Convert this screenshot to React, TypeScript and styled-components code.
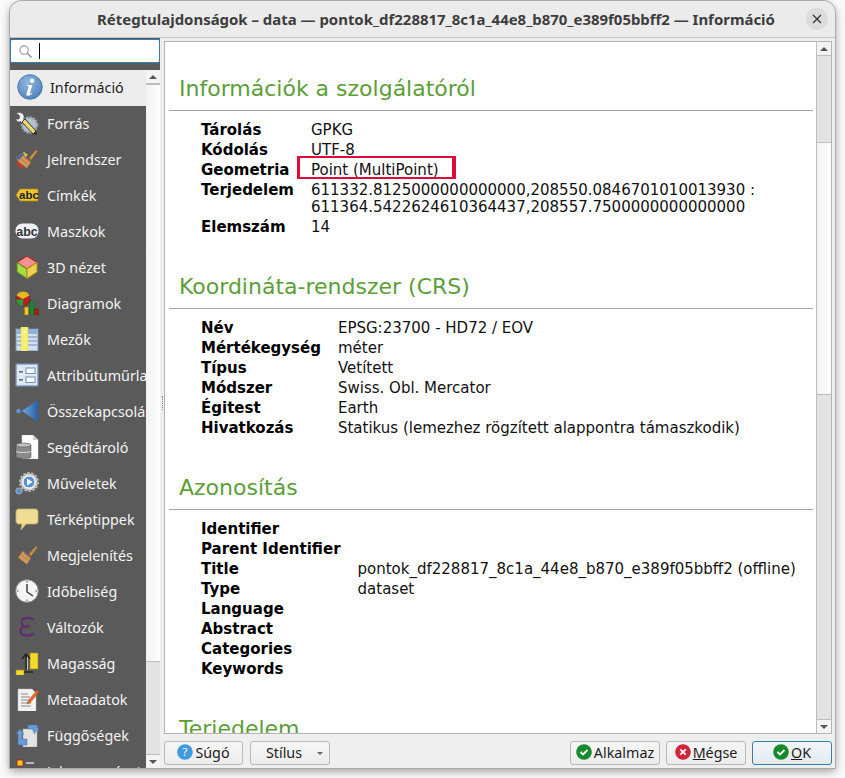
import React from "react";
import styled, { createGlobalStyle } from "styled-components";

const Global = createGlobalStyle`
  html, body { margin: 0; padding: 0; background: #fafafa; }
  #root { width: 845px; height: 778px; overflow: hidden; }
`;

const Window = styled.div`
  margin: 1px 0 0 10px;
  width: 825px;
  height: 767px;
  box-sizing: border-box;
  display: flex;
  flex-direction: column;
  background: #efefef;
  border-radius: 12px 12px 0 0;
  box-shadow: 0 0 0 1px #a9a9a9, 0 3px 10px rgba(0, 0, 0, 0.4);
  overflow: hidden;
`;
const TitleBar = styled.header`
  flex: 0 0 36px;
  display: flex;
  align-items: center;
  justify-content: center;
  position: relative;
  padding-left: 27px;
  background: #ebebeb;
  border-bottom: 1px solid #c4c4c4;
  font: 700 14.95px "Noto Sans", sans-serif;
  color: #3d3d3d;
  white-space: nowrap;
`;
const CloseButton = styled.div`
  position: absolute;
  right: 7px;
  top: 7px;
  width: 22px;
  height: 22px;
  border-radius: 50%;
  background: #dcdcdc;
  display: flex;
  align-items: center;
  justify-content: center;
`;
const Main = styled.div`
  flex: 1;
  min-height: 0;
  display: flex;
`;
const Sidebar = styled.aside`
  flex: 0 0 150px;
  display: flex;
  flex-direction: column;
  background: #5a5a5a;
  min-height: 0;
`;
const SearchBox = styled.div`
  flex: 0 0 24px;
  margin-top: 1px;
  box-sizing: border-box;
  background: #fff;
  border: 1px solid #3a7cab;
  border-radius: 2px;
  display: flex;
  align-items: center;
  padding-left: 8px;
  gap: 7px;
`;
const Caret = styled.span`
  width: 1px;
  height: 16px;
  background: #000;
`;
const SidebarBody = styled.div`
  margin-top: 7px;
  flex: 1;
  min-height: 0;
  display: flex;
`;
const NavList = styled.nav`
  flex: 0 0 136px;
  overflow: hidden;
`;
const NavItem = styled.div<{ $active?: boolean }>`
  height: 36px;
  display: flex;
  align-items: center;
  white-space: nowrap;
  overflow: hidden;
  box-sizing: border-box;
  padding-left: ${(p) => (p.$active ? "7px" : "5px")};
  gap: ${(p) => (p.$active ? "7px" : "8px")};
  background: ${(p) => (p.$active ? "#ececec" : "transparent")};
  color: ${(p) => (p.$active ? "#1c1c1c" : "#f4f4f4")};
  font: 400 14.3px "Noto Sans", sans-serif;
  span { position: relative; top: -1px; }
  svg { flex: none; position: relative; top: -1px; }
`;
const ScrollBar = styled.div<{ $width: number }>`
  flex: 0 0 ${(p) => p.$width}px;
  display: flex;
  flex-direction: column;
  background: #e3e3e3;
  box-sizing: border-box;
`;
const ScrollArrow = styled.div<{ $down?: boolean }>`
  flex: 0 0 14px;
  background: #f4f4f4;
  display: flex;
  align-items: center;
  justify-content: center;
  box-sizing: border-box;
  ${(p) => (p.$down ? "border-top: 1px solid #bdbdbd;" : "border-bottom: 1px solid #bdbdbd;")}
  &::after {
    content: "";
    border-left: 4px solid transparent;
    border-right: 4px solid transparent;
    ${(p) => (p.$down ? "border-top: 4px solid #555;" : "border-bottom: 4px solid #555;")}
  }
`;
const ScrollTrack = styled.div<{ $grow: number }>`
  flex: ${(p) => p.$grow} 0 0;
`;
const ScrollThumb = styled.div<{ $grow: number }>`
  flex: ${(p) => p.$grow} 0 0;
  background: linear-gradient(90deg, #f3f3f3, #fdfdfd);
  border-top: 1px solid #bdbdbd;
  border-bottom: 1px solid #bdbdbd;
  box-sizing: border-box;
`;
const Splitter = styled.div`
  flex: 0 0 4px;
  display: flex;
  align-items: center;
  justify-content: center;
  &::after {
    content: "";
    height: 14px;
    border-left: 1px dotted #8a8a8a;
  }
`;
const RightPane = styled.div`
  flex: 1;
  min-width: 0;
  display: flex;
  flex-direction: column;
  padding: 3px 3px 3px 0;
`;
const Frame = styled.div`
  flex: 0 0 693px;
  display: flex;
  position: relative;
  border: 1px solid #b4b4b4;
  background: #fff;
  box-sizing: border-box;
  overflow: hidden;
`;
const Content = styled.div`
  flex: 1;
  min-width: 0;
  overflow: hidden;
  padding: 34px 3px 0 4px;
`;
const FrameScroll = styled(ScrollBar)`
  border-left: 1px solid #bdbdbd;
`;
const Section = styled.section`
  & + & { margin-top: 37px; }
`;
const Heading = styled.h2`
  margin: 0;
  padding: 0 0 8px 10px;
  font: 400 22px/26px "DejaVu Sans", sans-serif;
  color: #5c9e38;
  border-bottom: 1px solid #a4a4a4;
`;
const InfoTable = styled.table`
  margin: 9px 0 0 32px;
  border-collapse: collapse;
  font: 400 15px/17px "DejaVu Sans", sans-serif;
  color: #111;
  td { padding: 1.5px 0; vertical-align: top; white-space: nowrap; }
  td:first-child { font-weight: 700; color: #000; padding-right: 17px; }
`;
const Highlight = styled.div`
  position: absolute;
  left: 132px;
  top: 114px;
  width: 159px;
  height: 23px;
  box-sizing: border-box;
  border: solid #dc0b3c;
  border-width: 2px 4px 2px 3px;
`;
const Footer = styled.footer`
  margin-top: 7px;
  height: 24px;
  display: flex;
  gap: 7px;
`;
const Spacer = styled.div`
  flex: 1;
`;
const DialogButtons = styled.div`
  display: flex;
  gap: 6px;
`;
const Button = styled.button<{ $w: number; $primary?: boolean; $menu?: boolean }>`
  width: ${(p) => p.$w}px;
  height: 24px;
  padding: 0 ${(p) => (p.$menu ? "12px" : "0")} 2px 0;
  box-sizing: border-box;
  display: flex;
  align-items: center;
  justify-content: center;
  gap: 2px;
  position: relative;
  border-radius: 3px;
  border: 1px solid ${(p) => (p.$primary ? "#3a7cab" : "#b9b9b9")};
  background: ${(p) => (p.$primary ? "linear-gradient(#f3f6f8, #e2eaf0)" : "linear-gradient(#f6f6f6, #ececec)")};
  font: 400 14.3px "Noto Sans", sans-serif;
  color: #1c1c1c;
`;
const DropArrow = styled.span`
  position: absolute;
  right: 6px;
  top: 10px;
  border-left: 3px solid transparent;
  border-right: 3px solid transparent;
  border-top: 3px solid #666;
`;

type S = { size?: number };
const Svg: React.FC<S & { children: React.ReactNode }> = ({ size = 24, children }) => (
  <svg width={size} height={size} viewBox="0 0 24 24">{children}</svg>
);

const InfoIcon = () => (
  <Svg size={26}>
    <defs>
      <radialGradient id="ig" cx="40%" cy="30%" r="80%"><stop offset="0" stopColor="#8fb6de" /><stop offset="1" stopColor="#4a7fbb" /></radialGradient>
    </defs>
    <circle cx="12" cy="12" r="11.3" fill="url(#ig)" stroke="#3f6ea6" strokeWidth="0.8" />
    <circle cx="14" cy="6.2" r="2" fill="#fff" />
    <path d="M9.2 10.2h5l-2.2 7.6c-.1.5.3.6 1.8-.4l.3.7c-1.7 1.6-3.2 2.1-4.4 2-1-.1-1.2-.9-.9-1.9l1.8-6.3c.1-.6-.3-.8-1.5-.7z" fill="#fff" />
  </Svg>
);
const SourceIcon = () => (
  <Svg>
    <circle cx="14.500" cy="14" r="7.500" fill="#b4c2d0" stroke="#9aa7b4" strokeWidth="2.500" strokeDasharray="2 1.200" />
    <path d="M1 3c3-2.500 6.500-1.500 7.500 1 .8 1.500.6 3-.2 4.200l3 3-2.300 2.300-3-3C4 11.500 1.500 10.500.5 8l3.200.2 1.200-2.400L3.500 3.500z" fill="#f2f2f2" stroke="#333" strokeWidth=".4" />
    <path d="M10 8l11 12-3 3L7 11z" fill="#f0d96c" stroke="#222" strokeWidth=".9" />
    <path d="M18 23l3-3 1 2-1 2z" fill="#333" />
  </Svg>
);
const Brush = () => (
  <>
    <path d="M14 11l7-8 1.6 1.3L16 13z" fill="#c98c3e" />
    <path d="M8 8l8 7-4 6.5-9-7z" fill="#cf9a5f" stroke="#8f6228" strokeWidth=".6" />
    <path d="M6.5 12l6 5M9 10l5.5 5" stroke="#8f6228" strokeWidth=".6" />
  </>
);
const SymbologyIcon = () => (
  <Svg>
    <path d="M1 11l8-6 4 3-9 7z" fill="#e9c93a" />
    <path d="M1 11l7-5 2 2-7 5z" fill="#3566b4" />
    <path d="M1 15l3 5 5 1-5-7z" fill="#d2342e" />
    <Brush />
  </Svg>
);
const PaintIcon = () => <Svg><Brush /></Svg>;
const LabelIcon = () => (
  <Svg>
    <path d="M5 6h18v12H5l-4-6z" fill="#eec52f" stroke="#a88510" strokeWidth=".7" />
    <text x="14" y="16" fontFamily="'Liberation Sans', sans-serif" fontWeight="700" fontSize="11.500" textAnchor="middle" fill="#222">abc</text>
  </Svg>
);
const MaskIcon = () => (
  <Svg>
    <rect x="0.500" y="4.500" width="23" height="15" rx="7" fill="#eef0fa" />
    <text x="12" y="16.500" fontFamily="'Liberation Sans', sans-serif" fontWeight="700" fontSize="12.500" textAnchor="middle" fill="#333">abc</text>
  </Svg>
);
const CubeIcon = () => (
  <Svg>
    <path d="M12 1l10 6.5L12 14 2 7.500z" fill="#f79090" stroke="#b41414" strokeWidth="1" />
    <path d="M2 7.500l10 6.500v9.500L2 17z" fill="#a6dc44" stroke="#5f8a12" strokeWidth="1" />
    <path d="M22 7.500L12 14v9.500L22 17z" fill="#f0d050" stroke="#b09012" strokeWidth="1" />
  </Svg>
);
const DiagramIcon = () => (
  <Svg>
    <circle cx="8" cy="8" r="7.2" fill="#bb1e1e" stroke="#333" strokeWidth=".6" />
    <path d="M8 8L1.500 4.500A7.200 7.200 0 0 1 14.500 4.500z" fill="#e8b820" />
    <path d="M8 8v7.200A7.200 7.200 0 0 1 1 9z" fill="#2a9a3a" />
    <rect x="9.500" y="16" width="4" height="8" fill="#f2c523" stroke="#8a6d10" strokeWidth=".5" />
    <rect x="15" y="10" width="4" height="14" fill="#1a8a3a" stroke="#0f5a26" strokeWidth=".5" />
    <rect x="19.500" y="18" width="4" height="6" fill="#a8201a" stroke="#6b1410" strokeWidth=".5" />
  </Svg>
);
const FieldsIcon = () => (
  <Svg>
    <rect x="1" y="2" width="22" height="22" fill="#d4e0f0" stroke="#6f8eb8" />
    <rect x="1" y="2" width="22" height="5" fill="#8fb0d8" />
    <path d="M12 10h10M12 14h10M12 18h10M2 10h6M2 14h6M2 18h6" stroke="#6f8eb8" strokeWidth="1" />
    <rect x="6" y="0" width="7" height="25" fill="#f5f075" stroke="#e2da4a" strokeWidth=".5" />
    <circle cx="9.500" cy="4.500" r="1" fill="#fff" />
  </Svg>
);
const FormIcon = () => (
  <Svg>
    <rect x="1" y="1" width="22" height="22" fill="#dfe7f1" stroke="#6f8eb8" strokeWidth="1.300" />
    <rect x="4" y="8" width="4" height="1.600" fill="#5f6f88" />
    <rect x="4" y="16" width="4" height="1.600" fill="#5f6f88" />
    <rect x="11" y="5" width="9" height="5.500" fill="#fff" stroke="#6f8eb8" />
    <rect x="11" y="14" width="9" height="5.500" fill="#fff" stroke="#6f8eb8" />
  </Svg>
);
const JoinIcon = () => (
  <Svg>
    <defs>
      <linearGradient id="jg" x1="0" x2="1" y1="0" y2="0"><stop offset="0" stopColor="#6ea8e2" /><stop offset="1" stopColor="#2a5fa2" /></linearGradient>
    </defs>
    <circle cx="3.500" cy="12" r="2.300" fill="#5a96d4" />
    <path d="M23 1v22L7 12z" fill="url(#jg)" />
  </Svg>
);
const AuxIcon = () => (
  <Svg>
    <path d="M7 0h11l5 5v19H7z" fill="#fff" stroke="#ddd" strokeWidth=".5" />
    <path d="M18 0v5h5z" fill="#ccc" />
    <path d="M1 10c0-2 15-2 15 0v12c0 2-15 2-15 0z" fill="#8a8a8a" stroke="#444" strokeWidth=".5" />
    <ellipse cx="8.500" cy="10" rx="7.500" ry="2" fill="#c2c2c2" stroke="#444" strokeWidth=".5" />
    <path d="M1 16c0 2 15 2 15 0" fill="none" stroke="#ddd" strokeWidth="1" />
  </Svg>
);
const ActionIcon = () => (
  <Svg>
    <circle cx="14" cy="11" r="8.500" fill="#e6e6e6" stroke="#b5b5b5" strokeWidth="3" strokeDasharray="2.400 1.400" />
    <circle cx="14" cy="11" r="6" fill="#5c8fd0" stroke="#fff" strokeWidth="1" />
    <path d="M12 7.500v7l5.500-3.500z" fill="#fff" />
    <circle cx="4" cy="20" r="3" fill="#5c8fd0" stroke="#bbb" strokeWidth="1.200" strokeDasharray="1.400 .8" />
  </Svg>
);
const TipIcon = () => (
  <Svg>
    <path d="M4 2h16c2 0 3 1 3 3v9c0 2-1 3-3 3H11l-5 6 1-6H4c-2 0-3-1-3-3V5c0-2 1-3 3-3z" fill="#eedd92" stroke="#c7b45e" strokeWidth=".8" />
  </Svg>
);
const ClockIcon = () => (
  <Svg>
    <circle cx="12" cy="12" r="11.300" fill="#f4f4f4" stroke="#8a8a8a" strokeWidth="1" />
    <path d="M12 5v8l6 4" fill="none" stroke="#333" strokeWidth="1.400" />
    <path d="M12 2v1.500M12 20.500V22M2 12h1.500M20.500 12H22" stroke="#555" strokeWidth="1" />
  </Svg>
);
const VarIcon = () => (
  <Svg>
    <path d="M19 5c-2-2-5-2.500-8-2-3 .6-4.500 2.500-4.500 4.500 0 2 1.500 3.500 4 4-3 .3-5 2-5 4.500 0 3 3 4.500 6.500 4.500 3 0 5.500-1 7-2.500M10.500 11.500h4" fill="none" stroke="#5d2f6e" strokeWidth="2.300" />
  </Svg>
);
const ElevIcon = () => (
  <Svg>
    <rect x="15" y="2" width="8" height="16" fill="#f3d92a" stroke="#9c8b12" strokeWidth=".6" />
    <rect x="1" y="19" width="8" height="6" fill="#f3d92a" stroke="#9c8b12" strokeWidth=".6" />
    <path d="M11 19V4M7 8l4-5 4 5M9 21h9" fill="none" stroke="#222" strokeWidth="1.300" />
    <path d="M12.500 19V6" stroke="#ddd" strokeWidth=".8" />
  </Svg>
);
const MetaIcon = () => (
  <Svg>
    <path d="M3 2h14l4 4v19H3z" fill="#f2f2f2" stroke="#bbb" strokeWidth=".5" />
    <path d="M6 7h7M6 10h9M6 13h9M6 16h10M6 19h10" stroke="#888" strokeWidth="1" />
    <path d="M22 3l2 2-9 11-3 1 1-3z" fill="#e56a25" stroke="#a2450f" strokeWidth=".4" />
  </Svg>
);
const DepIcon = () => (
  <Svg>
    <rect x="8" y="6" width="14" height="18" fill="#e3e3e3" stroke="#aaa" strokeWidth=".5" />
    <path d="M13 2h9l2 6h-4v3l-2-3V6h-5z" fill="#6d9ad4" stroke="#3f6ea6" strokeWidth=".5" />
    <path d="M1 11l4-5 4 5H7v5h5v6H3V11z" fill="#6d9ad4" stroke="#3f6ea6" strokeWidth=".5" />
  </Svg>
);
const LegendIcon = () => (
  <Svg>
    <rect x="2" y="1" width="6" height="6" fill="#f2c523" stroke="#a8201a" strokeWidth=".8" />
    <rect x="11" y="3" width="8" height="2" fill="#bbb" />
  </Svg>
);

const SearchIcon = () => (
  <svg width="13" height="13" viewBox="0 0 14 14">
    <circle cx="5.500" cy="5.500" r="4.500" fill="none" stroke="#9a9a9a" strokeWidth="1.200" />
    <path d="M9 9l4.500 4.500" stroke="#8a8a8a" strokeWidth="1.500" />
  </svg>
);
const HelpIcon = () => (
  <svg width="16" height="16" viewBox="0 0 16 16">
    <circle cx="8" cy="8" r="7.800" fill="#3f9ae0" />
    <text x="8" y="12" fontFamily="'Noto Sans', sans-serif" fontSize="11" textAnchor="middle" fill="#fff">?</text>
  </svg>
);
const OkIcon = () => (
  <svg width="16" height="16" viewBox="0 0 16 16">
    <circle cx="8" cy="8" r="7.800" fill="#178a2e" />
    <path d="M4.500 8l2.500 2.500 4.500-4.500" fill="none" stroke="#fff" strokeWidth="1.800" />
  </svg>
);
const CancelIcon = () => (
  <svg width="16" height="16" viewBox="0 0 16 16">
    <circle cx="8" cy="8" r="7.800" fill="#d0263a" />
    <path d="M5.300 5.300l5.400 5.400M10.700 5.300l-5.400 5.400" stroke="#fff" strokeWidth="1.800" />
  </svg>
);
const CloseIcon = () => (
  <svg width="10" height="10" viewBox="0 0 10 10">
    <path d="M1 1l8 8M9 1l-8 8" stroke="#333" strokeWidth="1.200" />
  </svg>
);

const nav: [string, React.FC][] = [
  ["Forrás", SourceIcon],
  ["Jelrendszer", SymbologyIcon],
  ["Címkék", LabelIcon],
  ["Maszkok", MaskIcon],
  ["3D nézet", CubeIcon],
  ["Diagramok", DiagramIcon],
  ["Mezők", FieldsIcon],
  ["Attribútuműrlap", FormIcon],
  ["Összekapcsolások", JoinIcon],
  ["Segédtároló", AuxIcon],
  ["Műveletek", ActionIcon],
  ["Térképtippek", TipIcon],
  ["Megjelenítés", PaintIcon],
  ["Időbeliség", ClockIcon],
  ["Változók", VarIcon],
  ["Magasság", ElevIcon],
  ["Metaadatok", MetaIcon],
  ["Függőségek", DepIcon],
  ["Jelmagyarázat", LegendIcon],
];

const Rows: React.FC<{ rows: [string, React.ReactNode][] }> = ({ rows }) => (
  <InfoTable>
    <tbody>
      {rows.map(([k, v]) => (
        <tr key={k}><td>{k}</td><td>{v}</td></tr>
      ))}
    </tbody>
  </InfoTable>
);

export default function App() {
  return (
    <>
      <Global />
      <Window>
        <TitleBar>
          Rétegtulajdonságok – data — pontok_df228817_8c1a_44e8_b870_e389f05bbff2 — Információ
          <CloseButton><CloseIcon /></CloseButton>
        </TitleBar>
        <Main>
          <Sidebar>
            <SearchBox><SearchIcon /><Caret /></SearchBox>
            <SidebarBody>
              <NavList>
                <NavItem $active><InfoIcon /><span>Információ</span></NavItem>
                {nav.map(([label, Icon]) => (
                  <NavItem key={label}><Icon /><span>{label}</span></NavItem>
                ))}
              </NavList>
              <ScrollBar $width={14}>
                <ScrollArrow />
                <ScrollThumb $grow={579} />
                <ScrollTrack $grow={92} />
                <ScrollArrow $down />
              </ScrollBar>
            </SidebarBody>
          </Sidebar>
          <Splitter />
          <RightPane>
            <Frame>
              <Content>
                <Section>
                  <Heading>Információk a szolgálatóról</Heading>
                  <Rows rows={[
                    ["Tárolás", "GPKG"],
                    ["Kódolás", "UTF-8"],
                    ["Geometria", "Point (MultiPoint)"],
                    ["Terjedelem", <>611332.8125000000000000,208550.0846701010013930 :<br />611364.5422624610364437,208557.7500000000000000</>],
                    ["Elemszám", "14"],
                  ]} />
                </Section>
                <Section>
                  <Heading>Koordináta-rendszer (CRS)</Heading>
                  <Rows rows={[
                    ["Név", "EPSG:23700 - HD72 / EOV"],
                    ["Mértékegység", "méter"],
                    ["Típus", "Vetített"],
                    ["Módszer", "Swiss. Obl. Mercator"],
                    ["Égitest", "Earth"],
                    ["Hivatkozás", "Statikus (lemezhez rögzített alappontra támaszkodik)"],
                  ]} />
                </Section>
                <Section>
                  <Heading>Azonosítás</Heading>
                  <Rows rows={[
                    ["Identifier", ""],
                    ["Parent Identifier", ""],
                    ["Title", "pontok_df228817_8c1a_44e8_b870_e389f05bbff2 (offline)"],
                    ["Type", "dataset"],
                    ["Language", ""],
                    ["Abstract", ""],
                    ["Categories", ""],
                    ["Keywords", ""],
                  ]} />
                </Section>
                <Section>
                  <Heading>Terjedelem</Heading>
                </Section>
              </Content>
              <FrameScroll $width={15}>
                <ScrollArrow />
                <ScrollTrack $grow={86} />
                <ScrollThumb $grow={251} />
                <ScrollTrack $grow={325} />
                <ScrollArrow $down />
              </FrameScroll>
              <Highlight />
            </Frame>
            <Footer>
              <Button $w={79}><HelpIcon />Súgó</Button>
              <Button $w={80} $menu>Stílus<DropArrow /></Button>
              <Spacer />
              <DialogButtons>
                <Button $w={90}><OkIcon />Alkalmaz</Button>
                <Button $w={80}><CancelIcon /><span><u>M</u>égse</span></Button>
                <Button $w={80} $primary><OkIcon /><span><u>O</u>K</span></Button>
              </DialogButtons>
            </Footer>
          </RightPane>
        </Main>
      </Window>
    </>
  );
}
